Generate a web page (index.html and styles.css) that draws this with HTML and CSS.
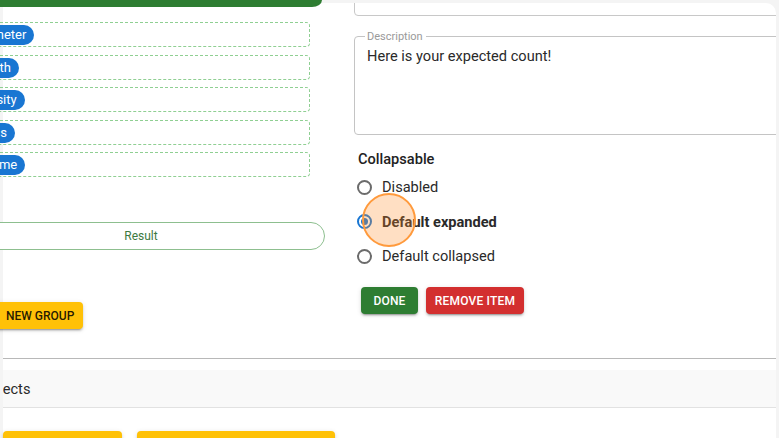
FILE: index.html
```html
<!DOCTYPE html>
<html lang="en">
<head>
<meta charset="utf-8">
<title>Editor</title>
<link rel="stylesheet" href="styles.css">
</head>
<body>
<div class="card">
  <div class="top">
    <div class="left">
      <div class="greenbar"></div>
      <div class="groups">
        <div class="group"><span class="chip">diameter</span></div>
        <div class="group"><span class="chip">length</span></div>
        <div class="group"><span class="chip">density</span></div>
        <div class="group"><span class="chip">mass</span></div>
        <div class="group"><span class="chip">volume</span></div>
      </div>
      <button class="result">Result</button>
      <button class="btn newgroup"><svg class="plus" viewBox="0 0 24 24" width="16" height="16"><path d="M19 13h-6v6h-2v-6H5v-2h6V5h2v6h6v2z" fill="currentColor"/></svg>NEW GROUP</button>
    </div>
    <div class="right">
      <div class="prevfield"></div>
      <fieldset class="desc">
        <legend>Description</legend>
        <div class="desc-text">Here is your expected count!</div>
      </fieldset>
      <div class="collapse-label">Collapsable</div>
      <div class="radios">
        <label class="radio"><span class="ring"></span><span class="rlabel">Disabled</span></label>
        <label class="radio selected"><span class="ring"><span class="dot"></span></span><span class="rlabel bold">Default expanded</span></label>
        <label class="radio"><span class="ring"></span><span class="rlabel">Default collapsed</span></label>
      </div>
      <div class="actions">
        <button class="btn done">DONE</button>
        <button class="btn remove">REMOVE ITEM</button>
      </div>
    </div>
  </div>
  <div class="divider"></div>
  <div class="objects-row"><span class="objects-text">Objects</span></div>
  <div class="bottom-buttons">
    <button class="btn ybtn yb1"></button>
    <button class="btn ybtn yb2"></button>
  </div>
</div>
<div class="click-indicator"></div>
</body>
</html>
```

FILE: styles.css
```css
* { box-sizing: border-box; }
html, body {
  margin: 0;
  padding: 0;
  width: 779px;
  height: 438px;
  overflow: hidden;
  background: #f4f4f4;
  font-family: Roboto, "Liberation Sans", sans-serif;
  color: rgba(0,0,0,0.87);
}
.card {
  margin: 3px 3px 0 3px;
  background: #fff;
  border-top-right-radius: 10px;
  height: 435px;
}
.top {
  display: flex;
  gap: 29px;
}
.left {
  width: 375px;
  margin-left: -53px;
  flex: none;
  display: flex;
  flex-direction: column;
  align-items: flex-start;
}
.greenbar {
  width: 372px;
  height: 7px;
  margin-top: -3px;
  background: #2e7d32;
  border-bottom-right-radius: 10px 7px;
}
.groups {
  align-self: flex-end;
  margin: 15px 15px 0 0;
  width: 349px;
  display: flex;
  flex-direction: column;
  gap: 7.5px;
}
.group {
  height: 25px;
  border: 1px dashed #8fcf92;
  border-radius: 4px;
  padding: 1px 5px 0;
  display: flex;
  align-items: center;
}
.chip {
  height: 20px;
  line-height: 20px;
  padding: 0 8px;
  border-radius: 10px;
  background: #1976d2;
  color: #fff;
  font-size: 13px;
}
.result {
  align-self: flex-end;
  margin-top: 45px;
  width: 368px;
  height: 28px;
  border: 1px solid #8dbf8f;
  border-radius: 14px;
  background: #fff;
  color: #3d7a3f;
  font-family: Roboto, "Liberation Sans", sans-serif;
  font-size: 12px;
}
.btn {
  border: none;
  border-radius: 4px;
  font-family: Roboto, "Liberation Sans", sans-serif;
  font-size: 12px;
  font-weight: 500;
  letter-spacing: 0.2px;
  box-shadow: 0 3px 1px -2px rgba(0,0,0,.2), 0 2px 2px 0 rgba(0,0,0,.14), 0 1px 5px 0 rgba(0,0,0,.12);
  padding: 0 10px;
}
.newgroup {
  margin-top: 52px;
  margin-left: 23px;
  height: 27px;
  background: #ffc107;
  color: rgba(0,0,0,0.87);
  display: flex;
  align-items: center;
  gap: 8px;
  padding: 0 9px;
  letter-spacing: 0;
}
.plus { flex: none; }
.right {
  flex: 1;
  overflow: hidden;
}
.prevfield {
  margin-top: -20px;
  width: calc(100% + 20px);
  height: 33px;
  border: 1px solid #c8c8c8;
  border-radius: 4px;
}
.desc {
  margin: 14px 0 0 0;
  width: calc(100% + 20px);
  border: 1px solid #c4c4c4;
  border-radius: 4px;
  padding: 0 10px;
  min-inline-size: 0;
}
.desc legend {
  padding: 0 3px 0 2px;
  margin-left: 0;
  font-size: 11px;
  line-height: 13px;
  color: #9a9a9a;
}
.desc-text {
  padding: 3px 0 0 2px;
  height: 91px;
  font-size: 14.6px;
  line-height: 20px;
  color: #2a2a2a;
}
.collapse-label {
  margin-top: 14px;
  padding-left: 4px;
  font-size: 14.6px;
  font-weight: 500;
  line-height: 20px;
  color: #222;
}
.radios {
  display: flex;
  flex-direction: column;
  padding: 1px 0 0 3px;
}
.radio {
  height: 34.5px;
  display: flex;
  align-items: center;
  gap: 10px;
  font-size: 14.6px;
  color: #2a2a2a;
}
.ring {
  width: 15px;
  height: 15px;
  border: 2px solid #6b6b6b;
  border-radius: 50%;
  display: flex;
  align-items: center;
  justify-content: center;
  flex: none;
}
.selected .ring { border-color: #1976d2; }
.dot {
  width: 7px;
  height: 7px;
  border-radius: 50%;
  background: #1976d2;
}
.bold { font-weight: 700; }
.actions {
  margin-top: 13.5px;
  padding-left: 7px;
  display: flex;
  gap: 8px;
}
.actions .btn {
  height: 27px;
  color: #fff;
}
.done { background: #2e7d32; width: 57px; padding: 0; }
.remove { background: #d32f2f; width: 98px; padding: 0; }
.divider {
  margin-top: 29px;
  height: 1px;
  background: #b8b8b8;
}
.objects-row {
  margin-top: 11px;
  height: 38px;
  background: #f9f9f9;
  border-bottom: 1px solid #e2e2e2;
  overflow: hidden;
  display: flex;
  align-items: center;
  font-size: 14.6px;
  color: #2a2a2a;
}
.objects-text { margin-left: -22px; }
.bottom-buttons {
  margin-top: 23px;
  display: flex;
  gap: 15px;
}
.ybtn {
  height: 30px;
  background: #ffc107;
}
.yb1 { width: 119px; }
.yb2 { width: 198px; }
.click-indicator {
  position: absolute;
  left: 362px;
  top: 193px;
  width: 54px;
  height: 54px;
  border-radius: 50%;
  border: 2px solid #ff9a3c;
  background: rgba(255, 140, 40, 0.28);
}
```
